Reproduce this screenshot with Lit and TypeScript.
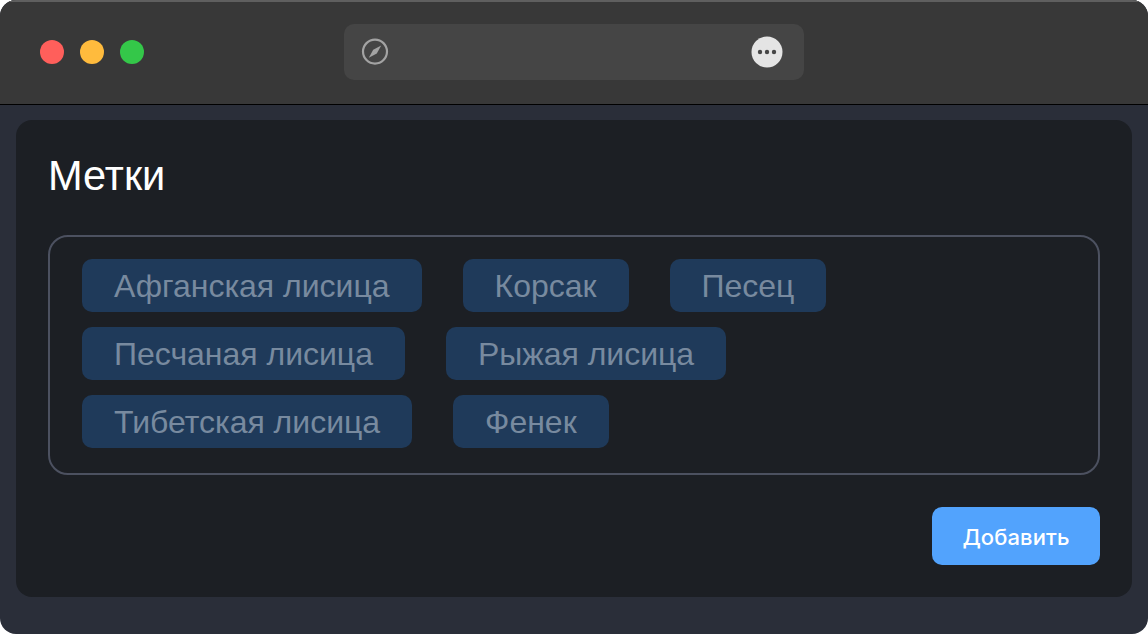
import { LitElement, html, css } from "lit";
import { customElement } from "lit/decorators.js";

const TAGS = ["Афганская лисица", "Корсак", "Песец", "Песчаная лисица", "Рыжая лисица", "Тибетская лисица", "Фенек"];

@customElement("app-root")
export class AppRoot extends LitElement {
  static styles = css`
    :host { display: block; width: 1148px; height: 634px; background: #fff; font-family: "Liberation Sans", sans-serif; }
    .window { width: 1148px; height: 634px; border-radius: 16px; overflow: hidden; display: flex; flex-direction: column; background: #2a2e39; }
    .titlebar { box-sizing: border-box; height: 105px; flex: none; background: #383838; border-top: 2px solid #5f5f5f; border-bottom: 1px solid #000; display: grid; grid-template-columns: 344px 460px; align-items: center; padding-bottom: 3px; }
    .lights { display: flex; gap: 16px; padding-left: 40px; }
    .light { width: 24px; height: 24px; border-radius: 50%; }
    .red { background: #ff5f5b; } .yellow { background: #ffbb3d; } .green { background: #34c749; }
    .address { height: 56px; border-radius: 10px; background: #454545; display: flex; align-items: center; justify-content: space-between; padding: 0 21px 0 17px; }
    .address svg { display: block; }
    .body { flex: 1; padding: 15px 16px 37px; display: flex; }
    .card { flex: 1; box-sizing: border-box; background: #1c1f24; border-radius: 16px; padding: 32px; display: flex; flex-direction: column; }
    h1 { margin: 0; font-size: 41.6px; line-height: 48px; font-weight: 400; color: #fff; height: 83px; }
    .tags { box-sizing: border-box; height: 240px; border: 2px solid #4c5160; border-radius: 20px; padding: 22px 32px; display: flex; flex-wrap: wrap; column-gap: 41px; row-gap: 15px; align-content: flex-start; }
    .tag { height: 53px; box-sizing: border-box; padding: 0 32px; border-radius: 10px; background: #1f3a5a; color: #788a9f; font-size: 32px; letter-spacing: -0.012px; line-height: 55px; white-space: nowrap; }
    .actions { display: flex; justify-content: flex-end; margin-top: 32px; }
    button { width: 168px; height: 58px; border: 0; border-radius: 10px; background: #52a3fd; color: #fff; font-family: Inter, sans-serif; font-size: 22px; font-weight: 450; letter-spacing: 0.1px; padding: 2px 0 0; }
  `;
  render() {
    return html`<div class="window">
      <div class="titlebar">
        <div class="lights"><div class="light red"></div><div class="light yellow"></div><div class="light green"></div></div>
        <div class="address">
          <svg width="28" height="28" viewBox="0 0 28 28"><circle cx="14" cy="13.6" r="12" fill="none" stroke="#a3a3a3" stroke-width="2.2"/><path d="M20.2 7.4 L15.8 15.4 L7.8 19.8 L12.2 11.8 Z" fill="#a3a3a3"/></svg>
          <svg width="32" height="32" viewBox="0 0 32 32"><circle cx="16" cy="16" r="15.5" fill="#e4e4e4"/><circle cx="9" cy="16" r="2.2" fill="#454545"/><circle cx="16" cy="16" r="2.2" fill="#454545"/><circle cx="23" cy="16" r="2.2" fill="#454545"/></svg>
        </div>
      </div>
      <div class="body">
        <div class="card">
          <h1>Метки</h1>
          <div class="tags">${TAGS.map((t) => html`<span class="tag">${t}</span>`)}</div>
          <div class="actions"><button>Добавить</button></div>
        </div>
      </div>
    </div>`;
  }
}
